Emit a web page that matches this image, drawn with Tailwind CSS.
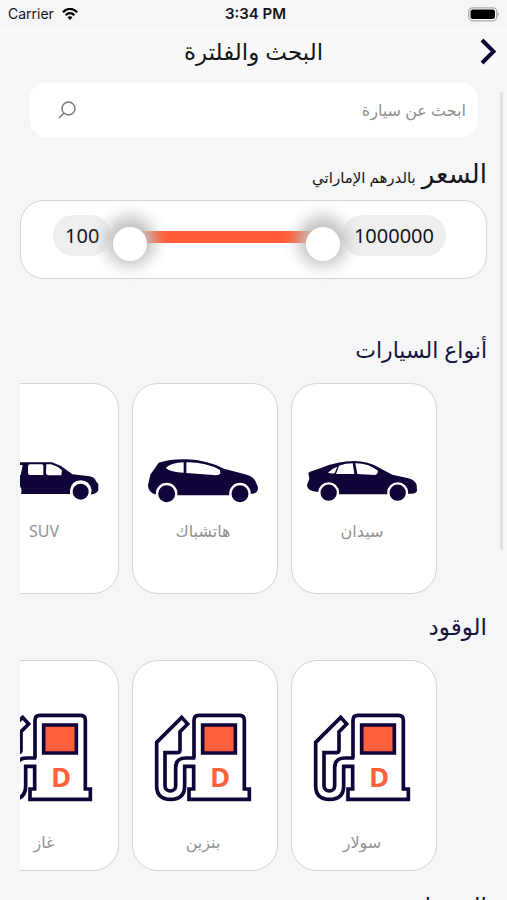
<!DOCTYPE html>
<html lang="ar" dir="rtl">
<head>
<meta charset="utf-8">
<meta name="viewport" content="width=device-width, initial-scale=1">
<title>البحث والفلترة</title>
<script src="https://cdn.jsdelivr.net/npm/@tailwindcss/browser@4"></script>
</head>
<body class="h-screen overflow-hidden bg-[#f4f6f8] font-['Noto_Sans','DejaVu_Sans',sans-serif] text-[#15151a]">
<svg class="hidden" aria-hidden="true">
  <symbol id="pump" viewBox="176 70 300 267">
    <g fill="none" stroke="#100438" stroke-width="11">
      <path d="M303 205H275Q244 205 244 234V288a16 16 0 0 1-32 0V189H248Q257 189 257 180V126L280 103L262 83L187 158V288Q187 329 229 329Q271 329 271 288V230H298V298H284V329H465V298H450V92Q450 77 436 77H313Q299 77 299 92V205"/>
      <path fill="#ff5f3a" d="M325 106H423V190H325Z"/>
    </g>
    <text x="377" y="291" text-anchor="middle" direction="ltr" font-family="Open Sans, sans-serif" font-weight="700" font-size="82" fill="#ff5f3a">D</text>
  </symbol>
</svg>
<div class="flex h-full flex-col">
  <div dir="ltr" class="grid h-7 shrink-0 grid-cols-3 items-center bg-[#f4f6f8] px-2 font-[Inter,sans-serif] text-sm">
    <div class="flex items-center gap-2">
      <span>Carrier</span>
      <svg class="h-3 w-4" viewBox="0 0 16 12" fill="none" stroke="#000" stroke-width="2.3"><path d="M.9 4.3C5-.2 11-.2 15.100 4.300"/><path d="M3.600 7.200C6.200 4.500 9.800 4.500 12.400 7.200"/><path fill="#000" stroke="none" d="M5.500 9.300Q8 7.200 10.500 9.300L8 11.900Z"/></svg>
    </div>
    <span class="pl-1 text-center text-[15px] font-semibold">3:34 PM</span>
    <svg class="h-[15px] w-8 justify-self-end" viewBox="0 0 32 15"><rect x="1.800" y=".8" width="28" height="13" rx="4" fill="#fff" stroke="#a9a9a9" stroke-width="1.300"/><rect x="3.500" y="2.500" width="24.500" height="9.500" rx="2.500"/><path d="M30.800 5q2 2.300 0 4.600z" fill="#999"/></svg>
  </div>
  <header class="grid h-[52px] shrink-0 grid-cols-[40px_1fr_40px] items-center bg-[#f8f8f8] pb-1.5">
    <button type="button" aria-label="رجوع" class="flex h-11 items-center justify-center">
      <svg class="h-7 w-5" viewBox="0 0 20 28" fill="none" stroke="#100438" stroke-width="4"><path d="M5 3L16.500 14.500L5 26"/></svg>
    </button>
    <h1 class="text-center text-[23px] font-medium">البحث والفلترة</h1>
  </header>
  <main class="min-h-0 flex-1 overflow-hidden px-5">
    <label class="ml-[10px] mr-[9px] mt-[3px] flex h-[54px] items-center rounded-2xl bg-white pl-7 pr-3">
      <input type="search" aria-label="ابحث عن سيارة" placeholder="ابحث عن سيارة" class="min-w-0 flex-1 bg-transparent text-base outline-none placeholder:text-[#8f8f8f]">
      <svg class="size-[18px]" viewBox="0 0 18 18" fill="none" stroke="#777" stroke-width="1.400"><circle cx="10.500" cy="7.500" r="6.500"/><path d="M6 12L1 17"/></svg>
    </label>
    <section class="pt-[18px]">
      <h2 class="flex h-9 items-baseline gap-1.5 text-[26px] leading-9"><span>السعر</span><span class="text-[15px]">بالدرهم الإماراتي</span></h2>
      <div dir="ltr" class="mt-[9px] flex h-[79px] items-start gap-0.5 rounded-3xl border border-[#d3d5d6] bg-white pl-8 pr-10 pt-[14px]">
        <output class="flex h-[41px] items-center rounded-full bg-[#efefef] px-3 text-xl">100</output>
        <div class="relative h-[45px] flex-1">
          <div class="absolute inset-x-6 top-4 h-3 bg-[#ff5c37]"></div>
          <input type="range" aria-label="أدنى سعر" min="100" max="1000000" value="100" class="pointer-events-none absolute inset-x-0 top-3 h-[34px] w-full appearance-none bg-transparent [&::-webkit-slider-thumb]:pointer-events-auto [&::-webkit-slider-thumb]:size-[34px] [&::-webkit-slider-thumb]:appearance-none [&::-webkit-slider-thumb]:rounded-full [&::-webkit-slider-thumb]:bg-white [&::-webkit-slider-thumb]:shadow-[0_-3px_16px_8px_#c0c0c0]">
          <input type="range" aria-label="أعلى سعر" min="100" max="1000000" value="1000000" class="pointer-events-none absolute inset-x-0 top-3 h-[34px] w-full appearance-none bg-transparent [&::-webkit-slider-thumb]:pointer-events-auto [&::-webkit-slider-thumb]:size-[34px] [&::-webkit-slider-thumb]:appearance-none [&::-webkit-slider-thumb]:rounded-full [&::-webkit-slider-thumb]:bg-white [&::-webkit-slider-thumb]:shadow-[0_-3px_16px_8px_#c0c0c0]">
        </div>
        <output class="flex h-[41px] items-center rounded-full bg-[#efefef] px-3 text-xl">1000000</output>
      </div>
    </section>
    <section class="pt-[52px]">
      <h2 class="h-9 text-[22px] leading-9 text-[#17133b]">أنواع السيارات</h2>
      <div class="mt-4 flex gap-[13px] overflow-hidden pr-[50px] text-base text-[#929292]">
        <button type="button" class="flex h-[211px] w-[146px] shrink-0 flex-col items-center rounded-[26px] border border-[#d3d5d6] bg-white pr-1 pt-[73px]">
          <svg class="h-[46px] w-[114px]" viewBox="155 80 342 138" fill="#100438"><path d="M170 124L205 112Q255 92 302 92Q345 92 379 113L417 133L462 143Q485 148 490 164L491 181Q489 190 474 190L400 192H255L190 184Q162 182 161 164L168 145L165 128Z"/><path fill="#fff" d="M224 127Q234 115 252 109L244 129Q230 130 224 127ZM257 106Q276 99 298 99L303 131H248ZM306 99Q342 98 374 121Q374 131 365 134L312 131Z"/><g stroke="#fff" stroke-width="7"><circle cx="226" cy="187" r="28"/><circle cx="433" cy="187" r="28"/></g></svg>
          <span class="mt-4 leading-6">سيدان</span>
        </button>
        <button type="button" class="flex h-[211px] w-[146px] shrink-0 flex-col items-center rounded-[26px] border border-[#d3d5d6] bg-white pr-1 pt-[73px]">
          <svg class="h-[46px] w-[114px]" viewBox="438 80 342 138" fill="#100438"><path d="M476 97Q510 86 560 87Q620 89 672 115L735 132Q760 138 767 154L774 171Q774 189 758 190L700 195H530L464 192Q444 184 444 165L451 133Z"/><path fill="#fff" d="M497 113Q511 98 551 96V127Q512 126 497 113ZM559 96Q617 95 660 119L661 130Q654 136 640 134L559 128Z"/><g stroke="#fff" stroke-width="7"><circle cx="500" cy="190" r="29"/><circle cx="720" cy="190" r="29"/></g></svg>
          <span class="mt-4 leading-6">هاتشباك</span>
        </button>
        <button type="button" class="flex h-[211px] w-[146px] shrink-0 flex-col items-center rounded-[26px] border border-[#d3d5d6] bg-white pr-1 pt-[73px]">
          <svg class="h-[46px] w-[114px]" viewBox="-38 80 342 138" fill="#100438"><path d="M-20 96H157L184 107L218 132L270 138Q286 141 289 153L296 161V180Q289 193 270 193L200 191H-30L-35 175Z"/><path fill="#fff" d="M69 104L63 135H-4L3 104ZM91 102H127Q131 102 131 107V134H91Q85 134 85 127V109Q85 102 91 102ZM140 102H154Q176 108 187 121L185 135H145Q139 134 139 128Z"/><path fill="#fff" d="M211 196V180Q215 151 243 150Q270 151 276 179L273 196Z"/><circle cx="243" cy="184" r="24"/><circle cx="34" cy="183" r="28" stroke="#fff" stroke-width="7"/></svg>
          <span class="mt-4 leading-6">SUV</span>
        </button>
      </div>
    </section>
    <section class="pt-[14px]">
      <h2 class="h-9 text-[23px] leading-9 text-[#17133b]">الوقود</h2>
      <div class="mt-4 flex gap-[13px] overflow-hidden pr-[50px] text-base text-[#929292]">
        <button type="button" class="flex h-[211px] w-[146px] shrink-0 flex-col items-center rounded-[26px] border border-[#d3d5d6] bg-white pr-1 pt-[52px]">
          <svg class="h-[89px] w-[100px]"><use href="#pump"/></svg>
          <span class="mt-7 leading-6">سولار</span>
        </button>
        <button type="button" class="flex h-[211px] w-[146px] shrink-0 flex-col items-center rounded-[26px] border border-[#d3d5d6] bg-white pr-1 pt-[52px]">
          <svg class="h-[89px] w-[100px]"><use href="#pump"/></svg>
          <span class="mt-7 leading-6">بنزين</span>
        </button>
        <button type="button" class="flex h-[211px] w-[146px] shrink-0 flex-col items-center rounded-[26px] border border-[#d3d5d6] bg-white pr-1 pt-[52px]">
          <svg class="h-[89px] w-[100px]"><use href="#pump"/></svg>
          <span class="mt-7 leading-6">غاز</span>
        </button>
      </div>
    </section>
    <section class="pt-4">
      <h2 class="h-9 text-[23px] leading-9 text-[#17133b]">الموديل</h2>
    </section>
  </main>
</div>
<div class="absolute right-1 top-[92px] h-[458px] w-[3px] rounded-full bg-[#dfe1e4]" aria-hidden="true"></div>
</body>
</html>
